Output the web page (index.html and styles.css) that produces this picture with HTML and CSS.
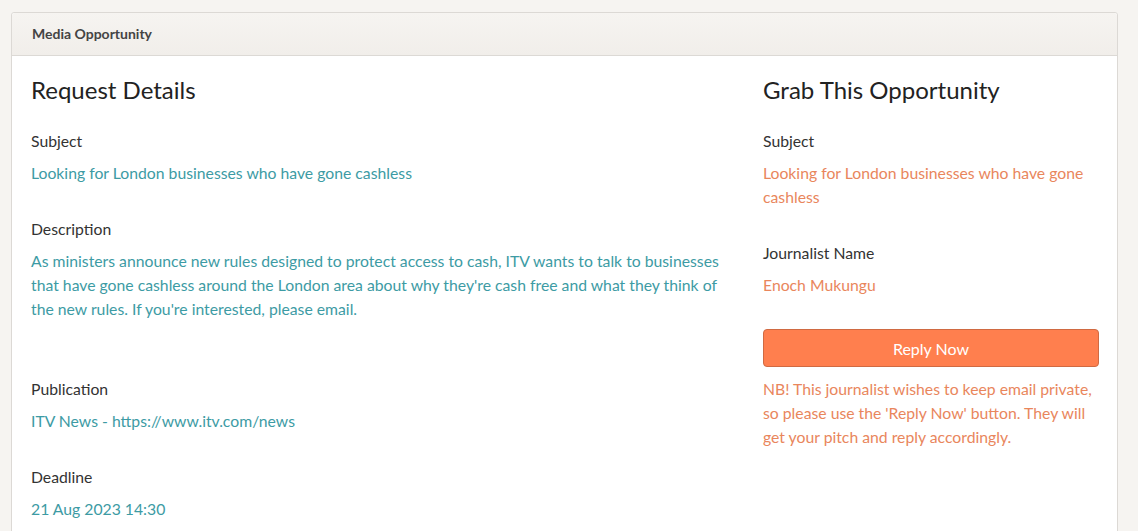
FILE: index.html
```html
<!DOCTYPE html>
<html>
<head>
<meta charset="utf-8">
<link rel="stylesheet" href="styles.css">
</head>
<body>
<div class="panel">
  <div class="panel-head">Media Opportunity</div>
  <div class="panel-body">
    <div class="col">
      <h2 class="title">Request Details</h2>
      <div class="field">
        <div class="label">Subject</div>
        <div class="value teal">Looking for London businesses who have gone cashless</div>
      </div>
      <div class="field">
        <div class="label">Description</div>
        <div class="value teal desc">As ministers announce new rules designed to protect access to cash, ITV wants to talk to businesses that have gone cashless around the London area about why they're cash free and what they think of the new rules. If you're interested, please email.</div>
      </div>
      <div class="field">
        <div class="label">Publication</div>
        <div class="value teal">ITV News - https://www.itv.com/news</div>
      </div>
      <div class="field">
        <div class="label">Deadline</div>
        <div class="value teal">21 Aug 2023 14:30</div>
      </div>
    </div>
    <div class="col">
      <h2 class="title">Grab This Opportunity</h2>
      <div class="field">
        <div class="label">Subject</div>
        <div class="value orange">Looking for London businesses who have gone cashless</div>
      </div>
      <div class="field">
        <div class="label">Journalist Name</div>
        <div class="value orange">Enoch Mukungu</div>
      </div>
      <button class="reply">Reply Now</button>
      <p class="note">NB! This journalist wishes to keep email private, so please use the 'Reply Now' button. They will get your pitch and reply accordingly.</p>
    </div>
  </div>
</div>
</body>
</html>
```
FILE: styles.css
```css
html, body {
  margin: 0;
  padding: 0;
  background: #f6f4f1;
  font-family: Lato, "Open Sans", sans-serif;
}
body {
  padding: 12px 20px 0 11px;
}
.panel {
  background: #fff;
  border: 1px solid #dcd9d5;
  border-radius: 3px 3px 0 0;
  min-height: 560px;
}
.panel-head {
  height: 42px;
  line-height: 42px;
  padding: 0 20px;
  font-size: 14px;
  font-weight: 700;
  color: #444;
  background: linear-gradient(#f6f4f1, #f1eeea);
  border-bottom: 1px solid #dcd9d5;
  border-radius: 3px 3px 0 0;
}
.panel-body {
  display: grid;
  grid-template-columns: 702px 336px;
  column-gap: 30px;
  padding: 20px 18px 0 19px;
}
.title {
  margin: 0 0 25px;
  font-size: 24px;
  line-height: 28px;
  font-weight: 400;
  color: #222;
}
.field {
  margin-bottom: 32px;
}
.label {
  font-size: 15.75px;
  line-height: 24px;
  color: #333;
  margin-bottom: 8px;
}
.value {
  font-size: 15.75px;
  line-height: 24px;
}
.desc {
  padding-bottom: 24px;
}
.teal {
  color: #3d9ba4;
}
.orange {
  color: #e9865c;
}
.reply {
  display: block;
  width: 100%;
  height: 38px;
  margin: 0;
  padding: 0;
  font-family: Lato, "Open Sans", sans-serif;
  font-size: 16px;
  color: #fff;
  background: #ff7f4e;
  border: 1px solid #d06a42;
  border-radius: 4px;
}
.note {
  margin: 10px 0 0;
  font-size: 15.75px;
  line-height: 24px;
  color: #e9865c;
}
```
